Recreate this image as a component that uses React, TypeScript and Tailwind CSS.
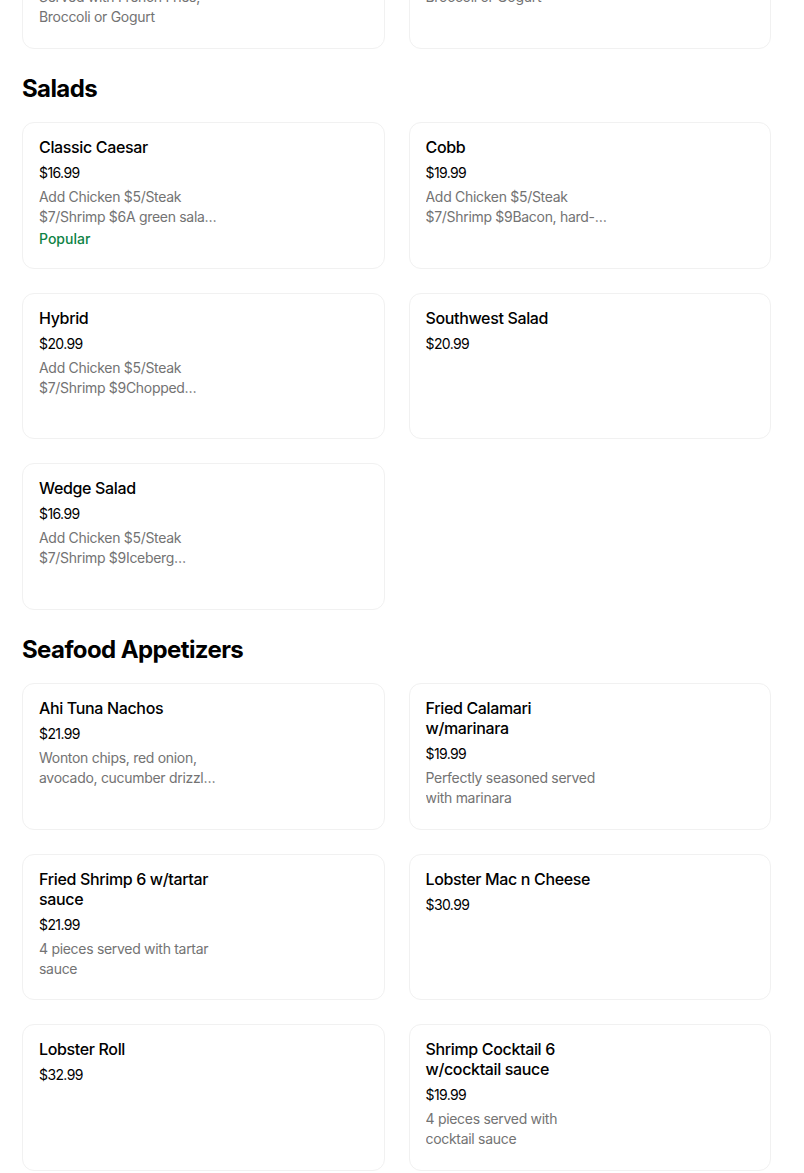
import React from 'react';

interface MenuItem {
  name: string;
  price: string;
  description?: string;
  popular?: boolean;
}

interface MenuSection {
  title?: string;
  items: MenuItem[];
}

const sections: MenuSection[] = [
  {
    items: [
      {
        name: 'Kids Chicken Tenders w/fries',
        price: '$10.99',
        description: 'Served with French Fries, Broccoli or Gogurt',
      },
      {
        name: 'Kids Grilled Cheese',
        price: '$9.99',
        description: 'Served with French Fries, Broccoli or Gogurt',
      },
    ],
  },
  {
    title: 'Salads',
    items: [
      {
        name: 'Classic Caesar',
        price: '$16.99',
        description:
          'Add Chicken $5/Steak $7/Shrimp $6A green salad of romaine lettuce and croutons dressed with lemon juice',
        popular: true,
      },
      {
        name: 'Cobb',
        price: '$19.99',
        description:
          'Add Chicken $5/Steak $7/Shrimp $9Bacon, hard-boiled egg, avocado, tomato, blue cheese',
      },
      {
        name: 'Hybrid',
        price: '$20.99',
        description:
          'Add Chicken $5/Steak $7/Shrimp $9Chopped romaine, kale, quinoa, feta and lemon vinaigrette',
      },
      { name: 'Southwest Salad', price: '$20.99' },
      {
        name: 'Wedge Salad',
        price: '$16.99',
        description:
          'Add Chicken $5/Steak $7/Shrimp $9Iceberg wedge, bacon, tomato and blue cheese dressing',
      },
    ],
  },
  {
    title: 'Seafood Appetizers',
    items: [
      {
        name: 'Ahi Tuna Nachos',
        price: '$21.99',
        description:
          'Wonton chips, red onion, avocado, cucumber drizzled with wasabi aioli and sweet soy',
      },
      {
        name: 'Fried Calamari w/marinara',
        price: '$19.99',
        description: 'Perfectly seasoned served with marinara',
      },
      {
        name: 'Fried Shrimp 6 w/tartar sauce',
        price: '$21.99',
        description: '4 pieces served with tartar sauce',
      },
      { name: 'Lobster Mac n Cheese', price: '$30.99' },
      { name: 'Lobster Roll', price: '$32.99' },
      {
        name: 'Shrimp Cocktail 6 w/cocktail sauce',
        price: '$19.99',
        description: '4 pieces served with cocktail sauce',
      },
    ],
  },
];

const ItemCard = ({ item }: { item: MenuItem }) => (
  <div className="h-[146.5px] overflow-hidden rounded-xl border border-[#f1f1f1] bg-white px-4 pt-[14px]">
    <div className="flex w-[184px] flex-col">
      <h3 className="text-[16px] leading-5 font-medium tracking-[-0.35px] text-black">
        {item.name}
      </h3>
      <p className="mt-[6px] text-[14px] leading-5 tracking-[-0.6px] text-black">
        {item.price}
      </p>
      {item.description && (
        <p className="mt-1 line-clamp-2 text-[14px] leading-5 tracking-[-0.3px] text-[#737373]">
          {item.description}
        </p>
      )}
      {item.popular && (
        <p className="mt-[2px] text-[14px] leading-5 font-medium text-[#0e8345]">
          Popular
        </p>
      )}
    </div>
  </div>
);

export default function App() {
  return (
    <div
      className="min-h-screen overflow-hidden bg-white pr-[33px] pl-[22px]"
      style={{ fontFamily: 'Inter, "Liberation Sans", sans-serif' }}
    >
      {sections.map((section, index) => (
        <section key={section.title ?? index}>
          {section.title && (
            <h2 className="mt-6 mb-[17.5px] text-[24px] leading-8 font-bold tracking-[-0.6px] text-black">
              {section.title}
            </h2>
          )}
          <div
            className={`grid grid-cols-2 gap-6 ${index === 0 ? 'mt-[-98px]' : ''}`}
          >
            {section.items.map((item) => (
              <ItemCard key={item.name} item={item} />
            ))}
          </div>
        </section>
      ))}
    </div>
  );
}
